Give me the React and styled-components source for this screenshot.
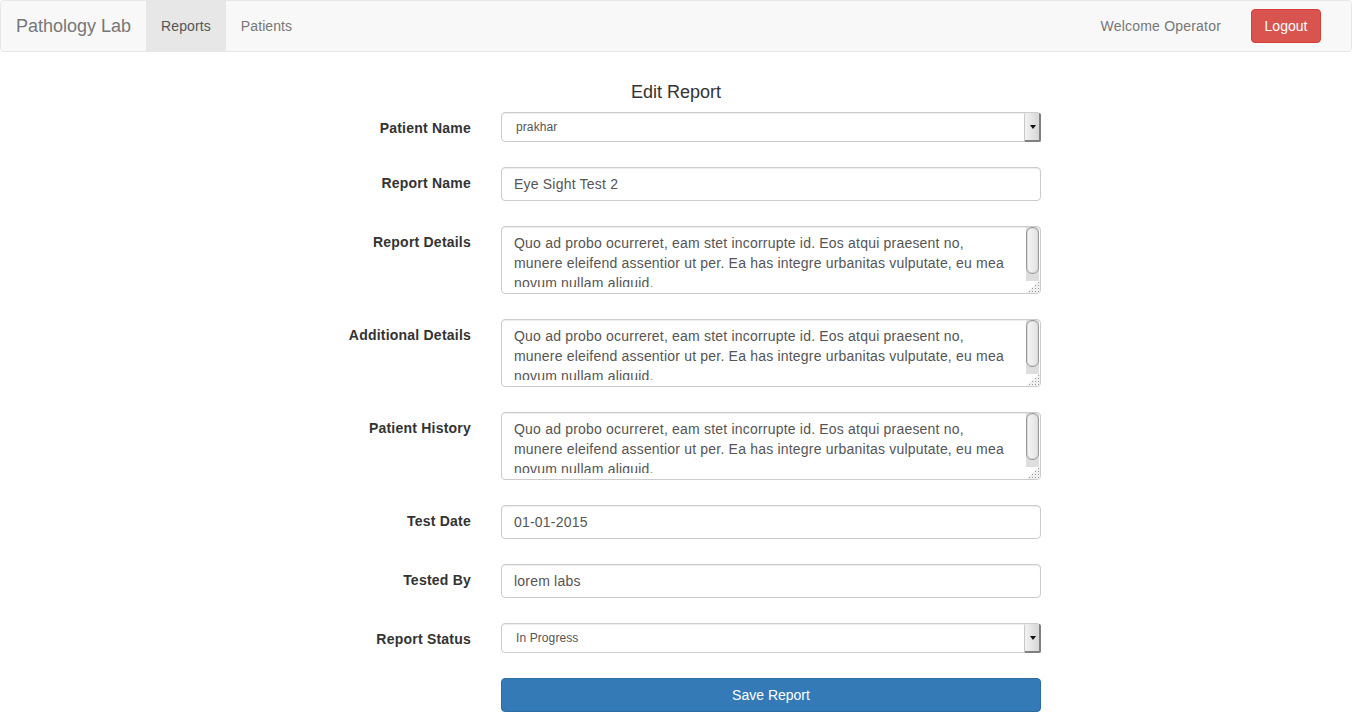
import React from 'react';
import styled, { createGlobalStyle } from 'styled-components';

const GlobalStyle = createGlobalStyle`
  * { box-sizing: border-box; }
  body {
    margin: 0;
    font-family: "Liberation Sans", Arial, Helvetica, sans-serif;
    font-size: 14px;
    line-height: 1.42857;
    color: #333;
    background: #fff;
  }
`;

const Navbar = styled.nav`
  display: flex;
  align-items: flex-start;
  min-height: 52px;
  background-color: #f8f8f8;
  border: 1px solid #e7e7e7;
  border-radius: 4px;
`;

const Brand = styled.a`
  padding: 15px;
  font-size: 18px;
  line-height: 20px;
  height: 50px;
  color: #777;
  text-decoration: none;
`;

const NavLink = styled.a`
  padding: 15px;
  line-height: 20px;
  letter-spacing: 0.1px;
  color: ${(p) => (p.active ? '#555' : '#777')};
  background-color: ${(p) => (p.active ? '#e7e7e7' : 'transparent')};
  text-decoration: none;
`;

const NavRight = styled.div`
  margin-left: auto;
  display: flex;
  align-items: flex-start;
  margin-right: 30px;
`;

const NavText = styled.p`
  margin: 15px 0;
  line-height: 20px;
  color: #777;
  letter-spacing: 0.2px;
`;

const DangerButton = styled.button`
  margin: 8px 0 0 30px;
  height: 34px;
  width: 70px;
  padding: 6px 12px;
  font-family: inherit;
  font-size: 14px;
  line-height: 20px;
  color: #fff;
  background-color: #d9534f;
  border: 1px solid #d43f3a;
  border-radius: 4px;
`;

const FormWrap = styled.form`
  width: 730px;
  margin: 0 auto;
  padding-top: 30px;
`;

const Title = styled.h4`
  margin: 0 0 10px;
  text-align: center;
  font-size: 18px;
  font-weight: 500;
  line-height: 20px;
  color: #333;
`;

const Rows = styled.div`
  display: flex;
  flex-direction: column;
  gap: 25px;
`;

const Row = styled.div`
  display: grid;
  grid-template-columns: 160px 540px;
  column-gap: 30px;
`;

const Label = styled.label`
  text-align: right;
  font-weight: bold;
  line-height: 20px;
  letter-spacing: 0.22px;
  padding-top: 6px;
`;

const boxLook = `
  background-color: #fff;
  border: 1px solid #ccc;
  border-radius: 4px;
  box-shadow: inset 0 1px 1px rgba(0, 0, 0, .075);
`;

const fieldBase = `
  ${boxLook}
  width: 100%;
  font-family: "Liberation Sans", Arial, Helvetica, sans-serif;
  color: #555;
  outline: none;
`;

const Input = styled.input`
  ${fieldBase}
  height: 34px;
  padding: 6px 12px;
  font-size: 14px;
  line-height: 20px;
  letter-spacing: 0.2px;
`;

/* the textarea box: border lives here, text is clipped above the bottom padding */
const AreaWrap = styled.div`
  ${boxLook}
  position: relative;
  height: 68px;
  padding-bottom: 6px;

  /* resize grip */
  &::after {
    content: '';
    position: absolute;
    right: 0;
    bottom: 0;
    width: 14px;
    height: 13px;
    background-color: #f0f0f0;
    background-image: radial-gradient(circle, #9c9c9c 0.7px, transparent 0.8px);
    background-size: 3px 3px;
    background-position: right bottom;
    clip-path: polygon(100% 0, 100% 100%, 0 100%);
    border-bottom-right-radius: 3px;
    pointer-events: none;
  }
`;

const ScrollTrack = styled.span`
  position: absolute;
  top: 0;
  right: 1px;
  bottom: 12px;
  width: 13px;
  background: #dedede;
  border-top-right-radius: 3px;
  pointer-events: none;

  &::before {
    content: '';
    position: absolute;
    top: 0;
    left: 0;
    width: 11px;
    height: 45px;
    background: linear-gradient(to right, #f6f6f6, #e2e2e2);
    border: 1px solid #9a9a9a;
    box-shadow: inset 0 0 0 1px #d8d8d8;
    border-radius: 6px;
  }
`;

const TextArea = styled.textarea`
  display: block;
  width: 100%;
  height: 60px;
  padding: 6px 30px 0 12px;
  border: none;
  background: transparent;
  font-family: "Liberation Sans", Arial, Helvetica, sans-serif;
  color: #555;
  font-size: 14px;
  line-height: 20px;
  letter-spacing: 0.2px;
  resize: none;
  overflow: hidden;
  outline: none;
`;

const SelectWrap = styled.div`
  position: relative;

  &::after {
    content: '';
    position: absolute;
    top: 1px;
    right: 0;
    bottom: 0;
    width: 14px;
    background: linear-gradient(to right, #f2f2f2, #d6d6d6);
    border-left: 1px solid #c8c8c8;
    border-right: 2px solid #808080;
    border-bottom: 2px solid #808080;
    border-radius: 2px;
    pointer-events: none;
  }

  &::before {
    content: '';
    position: absolute;
    top: 13px;
    right: 5px;
    border-top: 4px solid #111;
    border-left: 3px solid transparent;
    border-right: 3px solid transparent;
    z-index: 1;
    pointer-events: none;
  }
`;

const Select = styled.select`
  ${fieldBase}
  appearance: none;
  height: 30px;
  padding: 0 20px 0 14px;
  font-size: 12px;
  letter-spacing: 0.1px;
`;

const PrimaryButton = styled.button`
  width: 100%;
  height: 34px;
  padding: 6px 12px;
  font-family: inherit;
  font-size: 14px;
  line-height: 20px;
  color: #fff;
  background-color: #337ab7;
  border: 1px solid #2e6da4;
  border-radius: 4px;
`;

const lorem =
  'Quo ad probo ocurreret, eam stet incorrupte id. Eos atqui praesent no, munere eleifend assentior ut per. Ea has integre urbanitas vulputate, eu mea novum nullam aliquid.';

const LongField = ({ label }) => (
  <Row>
    <Label>{label}</Label>
    <AreaWrap>
      <TextArea defaultValue={lorem} />
      <ScrollTrack />
    </AreaWrap>
  </Row>
);

const App = () => {
  return (
    <>
      <GlobalStyle />
      <Navbar>
        <Brand href="#">Pathology Lab</Brand>
        <NavLink href="#" active>Reports</NavLink>
        <NavLink href="#">Patients</NavLink>
        <NavRight>
          <NavText>Welcome Operator</NavText>
          <DangerButton type="button">Logout</DangerButton>
        </NavRight>
      </Navbar>

      <FormWrap onSubmit={(e) => e.preventDefault()}>
        <Title>Edit Report</Title>
        <Rows>
          <Row>
            <Label>Patient Name</Label>
            <SelectWrap>
              <Select defaultValue="prakhar">
                <option value="prakhar">prakhar</option>
              </Select>
            </SelectWrap>
          </Row>
          <Row>
            <Label>Report Name</Label>
            <Input defaultValue="Eye Sight Test 2" />
          </Row>
          <LongField label="Report Details" />
          <LongField label="Additional Details" />
          <LongField label="Patient History" />
          <Row>
            <Label>Test Date</Label>
            <Input defaultValue="01-01-2015" />
          </Row>
          <Row>
            <Label>Tested By</Label>
            <Input defaultValue="lorem labs" />
          </Row>
          <Row>
            <Label>Report Status</Label>
            <SelectWrap>
              <Select defaultValue="progress">
                <option value="progress">In Progress</option>
                <option value="done">Completed</option>
              </Select>
            </SelectWrap>
          </Row>
          <Row>
            <span />
            <PrimaryButton type="submit">Save Report</PrimaryButton>
          </Row>
        </Rows>
      </FormWrap>
    </>
  );
};

export default App;
